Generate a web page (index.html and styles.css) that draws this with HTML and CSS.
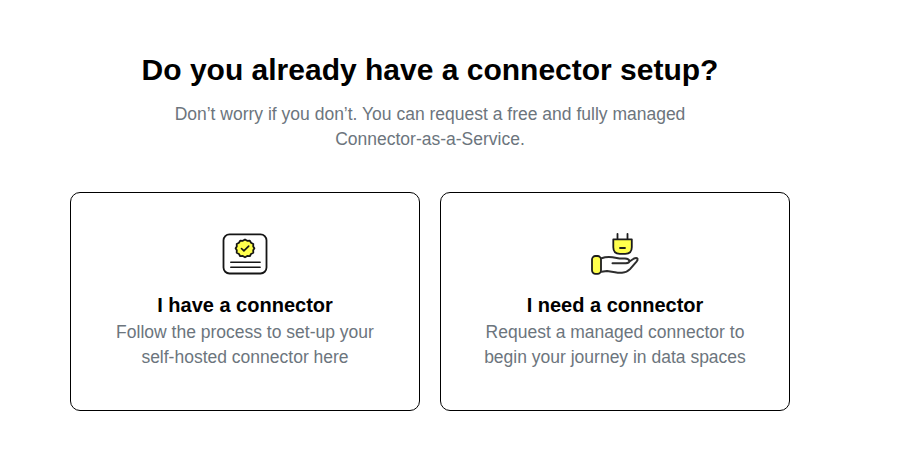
FILE: index.html
```html
<!DOCTYPE html>
<html lang="en">
<head>
<meta charset="utf-8">
<title>Connector setup</title>
<link rel="stylesheet" href="styles.css">
</head>
<body>
<main class="page">
  <h1 class="title">Do you already have a connector setup?</h1>
  <p class="intro">Don’t worry if you don’t. You can request a free and fully managed<br>Connector-as-a-Service.</p>
  <div class="cards">
    <a class="card">
      <svg class="icon" viewBox="0 0 60 52" fill="none" stroke="#151515" stroke-width="1.8" stroke-linecap="round" stroke-linejoin="round">
        <rect x="8.500" y="6.300" width="43" height="39.200" rx="6"/>
        <path fill="#ffff4d" d="M30 11.500l2.200 1.300 2.600-.2 1.200 2.200 2.300 1.200-.1 2.500 1.200 1.800-1.200 2 .1 2.500-2.300 1.200-1.200 2.200-2.600-.2L30 29.300l-2.200-1.300-2.600.2-1.200-2.200-2.300-1.200.1-2.500-1.200-2 1.200-1.800-.1-2.500 2.300-1.200 1.200-2.200 2.600.2z"/>
        <path stroke-width="1.600" d="M26.500 20.500l2.400 2.400 4.800-4.800M15.800 34.200h29.300M15.800 39.300h29.300"/>
      </svg>
      <h2 class="card-title">I have a connector</h2>
      <p class="card-text">Follow the process to set-up your<br>self-hosted connector here</p>
    </a>
    <a class="card">
      <svg class="icon" viewBox="0 0 60 52" fill="none" stroke="#1c1c1c" stroke-width="1.800" stroke-linecap="round" stroke-linejoin="round">
        <path d="M32.500 5.800v5M42.500 5.800v5"/>
        <path fill="#ffff4d" d="M28.300 11.300h18.500v8q0 6.500-6.500 6.500h-5.500q-6.500 0-6.500-6.500zM35 20h5"/>
        <rect x="7" y="28" width="9" height="17.800" rx="3.500" fill="#ffff4d"/>
        <path stroke="#2d2d2d" stroke-width="2" d="M16.500 30.200q5-1.800 11-1l7 1.200 5.500.1q4 .3 4.500 2.500 0 2-3.500 2.200H27.500M44.500 33.500l4.500-3q2.500-1.200 3.500.2.400 1.300-1 3l-6.500 7.500q-3 3.300-8 3.600-3.500.2-7-.6l-8-1.300-5.500.8"/>
      </svg>
      <h2 class="card-title">I need a connector</h2>
      <p class="card-text">Request a managed connector to<br>begin your journey in data spaces</p>
    </a>
  </div>
</main>
</body>
</html>
```
FILE: styles.css
```css
* { box-sizing: border-box; }
body { margin: 0; background: #fff; font-family: "Liberation Sans", Arial, sans-serif; color: #000; }
.page { width: 720px; margin-left: 70px; padding-top: 46px; text-align: center; }
.title { margin: 0; font-size: 30px; line-height: 48px; font-weight: 700; }
.intro { margin: 8px 0 0; font-size: 17.5px; line-height: 25px; color: #6c757d; }
.cards { display: grid; grid-template-columns: 1fr 1fr; gap: 20px; margin-top: 40px; }
.card { height: 219px; padding-top: 35px; border: 1px solid #000; border-radius: 10px; }
.icon { display: block; width: 60px; height: 52px; margin: 0 auto; }
.card-title { margin: 12px 0 0; font-size: 20px; line-height: 27px; }
.card-text { margin: 1px 0 0; font-size: 17.5px; line-height: 25px; color: #6c757d; }
```
